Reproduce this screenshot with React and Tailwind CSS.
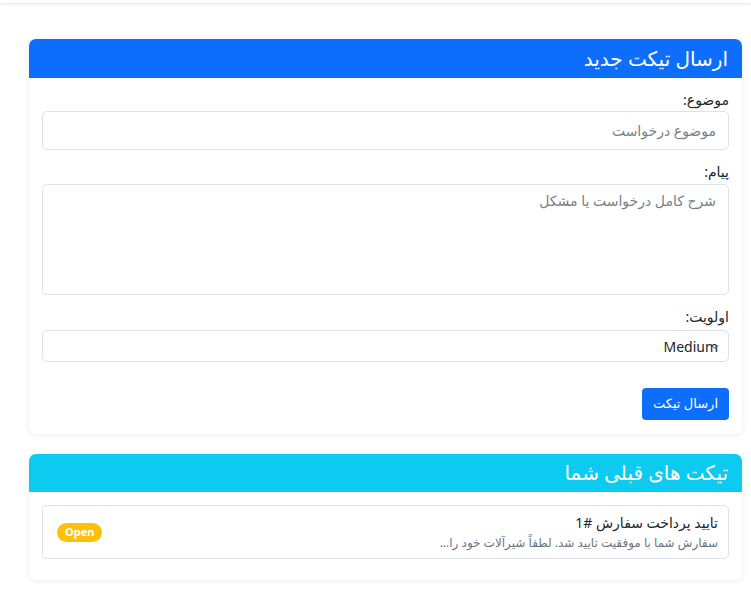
export default function App() {
  const font = { fontFamily: '"Noto Sans", "DejaVu Sans", sans-serif' };
  return (
    <div dir="rtl" className="min-h-screen bg-white text-[#212529]" style={font}>
      <div className="h-[3px] shadow-[0_1px_3px_rgba(0,0,0,0.12)]" />

      <div className="mr-[9px] ml-[29px] pt-[36px] pb-6">
        {/* New ticket */}
        <div className="rounded-[7px] bg-white shadow-[0_1px_6px_rgba(0,0,0,0.08)]">
          <div className="h-[39px] rounded-t-[7px] bg-[#0d6efd] px-[14px] flex items-center">
            <h2 className="text-[20px] text-white leading-none">ارسال تیکت جدید</h2>
          </div>

          <div className="px-[13px] pt-[12px] pb-[14px]">
            <label className="block text-[14px] leading-[20px] mb-[1px]">موضوع:</label>
            <input
              type="text"
              placeholder="موضوع درخواست"
              className="w-full h-[39px] border border-[#dee2e6] rounded-[5px] px-[12px] text-[14px] placeholder:text-[#7a7f85] outline-none"
            />

            <label className="block text-[14px] leading-[20px] mt-[12px] mb-[2px]">پیام:</label>
            <textarea
              placeholder="شرح کامل درخواست یا مشکل"
              className="block w-full h-[111px] border border-[#dee2e6] rounded-[5px] px-[12px] py-[5px] text-[14px] placeholder:text-[#7a7f85] outline-none resize-none"
            />

            <label className="block text-[14px] leading-[20px] mt-[12px] mb-[3px]">اولویت:</label>
            <div className="relative h-[32px] border border-[#dee2e6] rounded-[5px] flex items-center px-[10px]">
              <span className="text-[14px] text-[#212529]" style={{ fontFamily: '"Noto Sans", sans-serif' }}>Medium</span>
              <svg className="absolute right-[8px] top-[12px]" width="10" height="8" viewBox="0 0 16 16" fill="none" stroke="#343a40" strokeWidth="2" strokeLinecap="round" strokeLinejoin="round">
                <path d="m2 5 6 6 6-6" />
              </svg>
            </div>

            <div className="mt-[26px] flex">
              <button className="h-[32px] px-[11px] rounded-[4px] bg-[#0d6efd] text-white text-[13px]">ارسال تیکت</button>
            </div>
          </div>
        </div>

        {/* Previous tickets */}
        <div className="mt-[20px] rounded-[7px] bg-white shadow-[0_1px_6px_rgba(0,0,0,0.08)]">
          <div className="h-[38px] rounded-t-[7px] bg-[#0dcaf0] px-[14px] flex items-center">
            <h2 className="text-[20px] text-white leading-none">تیکت های قبلی شما</h2>
          </div>
          <div className="px-[13px] pt-[13px] pb-[21px]">
            <div className="h-[54px] border border-[#dee2e6] rounded-[5px] px-[10px] flex items-center justify-between">
              <div>
                <div className="text-[14px] leading-[20px]">تایید پرداخت سفارش #1</div>
                <div className="text-[12px] leading-[18px] text-[#6c757d] mt-[1px]">سفارش شما با موفقیت تایید شد. لطفاً شیرآلات خود را...</div>
              </div>
              <span className="ml-[4px] h-[19px] px-[8px] rounded-full bg-[#ffc107] text-white text-[11px] font-bold flex items-center" style={{ fontFamily: '"Noto Sans", sans-serif' }}>Open</span>
            </div>
          </div>
        </div>
      </div>
    </div>
  );
}
